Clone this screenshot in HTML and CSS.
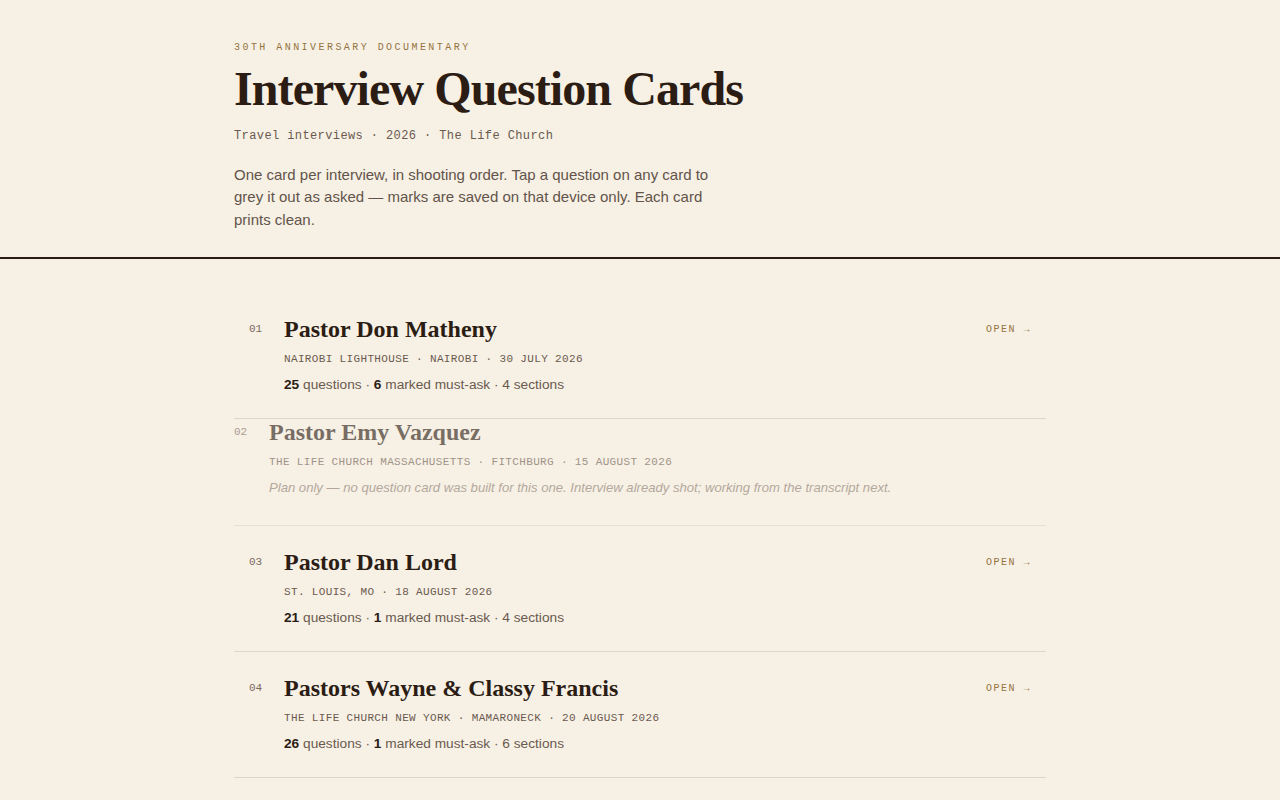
FILE: index.html
```html
<!DOCTYPE html>
<html lang="en">
<head>
<meta charset="utf-8">
<title>Interview Question Cards</title>
<link rel="stylesheet" href="styles.css">
</head>
<body>
<header class="masthead">
  <div class="wrap">
    <div class="eyebrow">30th Anniversary Documentary</div>
    <h1 class="title">Interview Question Cards</h1>
    <div class="subtitle">Travel interviews · 2026 · The Life Church</div>
    <p class="intro">One card per interview, in shooting order. Tap a question on any card to grey it out as asked — marks are saved on that device only. Each card prints clean.</p>
  </div>
</header>
<main class="wrap list">
  <a class="card" href="#">
    <span class="num">01</span>
    <div class="body">
      <h2 class="name">Pastor Don Matheny</h2>
      <div class="meta">Nairobi Lighthouse · Nairobi · 30 July 2026</div>
      <div class="stats"><b>25</b> questions · <b>6</b> marked must-ask · 4 sections</div>
    </div>
    <span class="open">Open →</span>
  </a>
  <div class="card plan">
    <span class="num">02</span>
    <div class="body">
      <h2 class="name">Pastor Emy Vazquez</h2>
      <div class="meta">The Life Church Massachusetts · Fitchburg · 15 August 2026</div>
      <div class="note">Plan only — no question card was built for this one. Interview already shot; working from the transcript next.</div>
    </div>
  </div>
  <a class="card" href="#">
    <span class="num">03</span>
    <div class="body">
      <h2 class="name">Pastor Dan Lord</h2>
      <div class="meta">St. Louis, MO · 18 August 2026</div>
      <div class="stats"><b>21</b> questions · <b>1</b> marked must-ask · 4 sections</div>
    </div>
    <span class="open">Open →</span>
  </a>
  <a class="card" href="#">
    <span class="num">04</span>
    <div class="body">
      <h2 class="name">Pastors Wayne &amp; Classy Francis</h2>
      <div class="meta">The Life Church New York · Mamaroneck · 20 August 2026</div>
      <div class="stats"><b>26</b> questions · <b>1</b> marked must-ask · 6 sections</div>
    </div>
    <span class="open">Open →</span>
  </a>
</main>
</body>
</html>
```

FILE: styles.css
```css
* { box-sizing: border-box; }
html, body { margin: 0; padding: 0; }
body {
  background: #f7f0e5;
  color: #2b1d14;
  font-family: "Liberation Sans", Arial, sans-serif;
}
.wrap {
  width: 812px;
  margin: 0 auto;
}
.masthead {
  padding: 42px 0 26px;
  border-bottom: 2px solid #2b1d14;
}
.eyebrow {
  font-family: "Liberation Mono", monospace;
  font-size: 10px;
  line-height: 12px;
  letter-spacing: 2.45px;
  text-transform: uppercase;
  color: #94743f;
}
.title {
  margin: 9px 0 0;
  font-family: "Liberation Serif", "Times New Roman", serif;
  font-weight: 700;
  font-size: 48px;
  line-height: 1.1;
  letter-spacing: -0.9px;
  color: #2b1d14;
}
.subtitle {
  margin-top: 11px;
  font-family: "Liberation Mono", monospace;
  font-size: 12px;
  line-height: 18px;
  letter-spacing: 0.4px;
  color: #6a5a4e;
}
.intro {
  margin: 19px 0 0;
  max-width: 485px;
  font-size: 15px;
  line-height: 22.5px;
  color: #62544a;
}
.list {
  padding-top: 34px;
}
.card {
  display: grid;
  grid-template-columns: 35px 1fr auto;
  align-items: start;
  padding: 22px 15px 23px;
  border-bottom: 1px solid #e0d6c8;
  text-decoration: none;
  color: inherit;
}
.card.plan {
  padding: 0 0 27px;
  opacity: 0.62;
}
.card.plan .body,
.card.plan .num {
  margin-top: -1px;
}
.num {
  font-family: "Liberation Mono", monospace;
  font-size: 11px;
  line-height: 29px;
  color: #7a6a5e;
}
.name {
  margin: 0;
  font-family: "Liberation Serif", "Times New Roman", serif;
  font-weight: 700;
  font-size: 24px;
  line-height: 29px;
  color: #2b1d14;
}
.meta {
  margin-top: 8px;
  font-family: "Liberation Mono", monospace;
  font-size: 11px;
  line-height: 15px;
  letter-spacing: 0.35px;
  text-transform: uppercase;
  color: #6a5a4e;
}
.stats {
  margin-top: 8px;
  font-size: 13.7px;
  line-height: 20px;
  color: #6a5a4e;
}
.stats b {
  color: #2b1d14;
}
.note {
  margin-top: 8px;
  font-size: 13.1px;
  line-height: 20px;
  font-style: italic;
  color: #8a7c70;
}
.open {
  font-family: "Liberation Mono", monospace;
  font-size: 10px;
  line-height: 29px;
  letter-spacing: 1.5px;
  text-transform: uppercase;
  color: #94743f;
}
```
